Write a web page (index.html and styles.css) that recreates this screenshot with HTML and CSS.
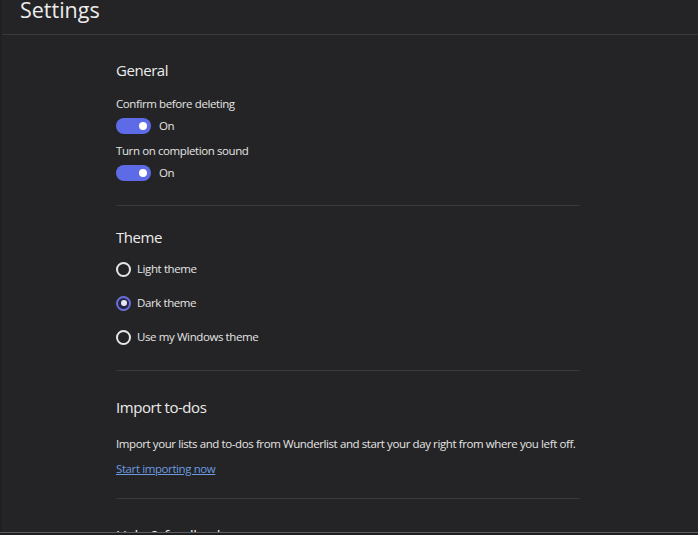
FILE: index.html
```html
<!DOCTYPE html>
<html lang="en">
<head>
<meta charset="utf-8">
<title>Settings</title>
<link rel="stylesheet" href="styles.css">
</head>
<body>
<div class="window">
  <div class="app">
    <header class="top"><h1 class="title">Settings</h1></header>
    <main class="content">
      <section class="sec sec-general">
        <h2 class="heading">General</h2>
        <div class="label first">Confirm before deleting</div>
        <div class="toggle-row">
          <span class="toggle"><span class="knob"></span></span>
          <span class="state">On</span>
        </div>
        <div class="label second">Turn on completion sound</div>
        <div class="toggle-row">
          <span class="toggle"><span class="knob"></span></span>
          <span class="state">On</span>
        </div>
      </section>
      <section class="sec sec-theme">
        <h2 class="heading">Theme</h2>
        <div class="radios">
          <div class="radio-row"><span class="radio"></span><span class="rlabel">Light theme</span></div>
          <div class="radio-row"><span class="radio checked"></span><span class="rlabel">Dark theme</span></div>
          <div class="radio-row"><span class="radio"></span><span class="rlabel">Use my Windows theme</span></div>
        </div>
      </section>
      <section class="sec sec-import">
        <h2 class="heading">Import to-dos</h2>
        <p class="para">Import your lists and to-dos from Wunderlist and start your day right from where you left off.</p>
        <a class="link" href="#">Start importing now</a>
      </section>
      <section class="sec sec-help">
        <h2 class="heading">Help &amp; feedback</h2>
      </section>
    </main>
  </div>
  <div class="bottom-edge"></div>
</div>
</body>
</html>
```
FILE: styles.css
```css
html, body {
  margin: 0;
  padding: 0;
  background: #242426;
}
body {
  font-family: "Open Sans", "Noto Sans", sans-serif;
  color: #e4e4e4;
}
.window {
  width: 698px;
  height: 535px;
  display: flex;
  flex-direction: column;
  overflow: hidden;
}
.app {
  height: 532px;
  overflow: hidden;
  display: flex;
  flex-direction: column;
  border-left: 2px solid #202022;
  box-sizing: border-box;
}
.bottom-edge {
  height: 1px;
  background: #5c5c5e;
  border-bottom: 2px solid #1f1f21;
}
.top {
  height: 34px;
  border-bottom: 1px solid #38383a;
  padding-left: 18px;
  flex-shrink: 0;
}
.title {
  margin: 0;
  font-size: 21.5px;
  line-height: 20px;
  font-weight: 400;
  color: #ececec;
}
.content {
  padding-left: 114px;
  width: 464px;
}
.sec {
  display: flex;
  flex-direction: column;
  align-items: flex-start;
  border-bottom: 1px solid #38383a;
}
.heading {
  margin: 0;
  font-size: 15px;
  line-height: 20px;
  font-weight: 400;
  letter-spacing: -0.45px;
  color: #ececec;
}
.sec-general { padding-top: 25px; padding-bottom: 24px; }
.sec-theme { padding-top: 21px; padding-bottom: 16px; }
.sec-import { padding-top: 26px; padding-bottom: 21px; }
.sec-help { padding-top: 26px; border-bottom: none; }

.label,
.state,
.rlabel,
.para,
.link {
  font-size: 11.5px;
  line-height: 16px;
  letter-spacing: -0.4px;
}
.label.first { margin-top: 16px; }
.label.second { margin-top: 9px; }
.toggle-row {
  margin-top: 6px;
  display: flex;
  align-items: center;
  gap: 8px;
  height: 16px;
}
.toggle {
  width: 35px;
  height: 16px;
  border-radius: 8px;
  background: #5d6ce6;
  display: flex;
  align-items: center;
  justify-content: flex-end;
  padding-right: 4px;
  box-sizing: border-box;
}
.knob {
  width: 8px;
  height: 8px;
  border-radius: 50%;
  background: #ffffff;
}
.radios {
  margin-top: 5px;
  display: flex;
  flex-direction: column;
}
.radio-row {
  height: 34px;
  display: flex;
  align-items: center;
  gap: 6px;
}
.radio {
  width: 15px;
  height: 15px;
  box-sizing: border-box;
  border: 2px solid #e6e6e6;
  border-radius: 50%;
  display: flex;
  align-items: center;
  justify-content: center;
}
.radio.checked {
  border: 2px solid #6a6fd8;
  background: #26264a;
}
.radio.checked::after {
  content: "";
  width: 6px;
  height: 6px;
  border-radius: 50%;
  background: #e8e8f4;
}
.para {
  margin: 19px 0 0;
  white-space: nowrap;
}
.link {
  margin-top: 9px;
  color: #6b9be0;
  text-decoration: underline;
}
```
